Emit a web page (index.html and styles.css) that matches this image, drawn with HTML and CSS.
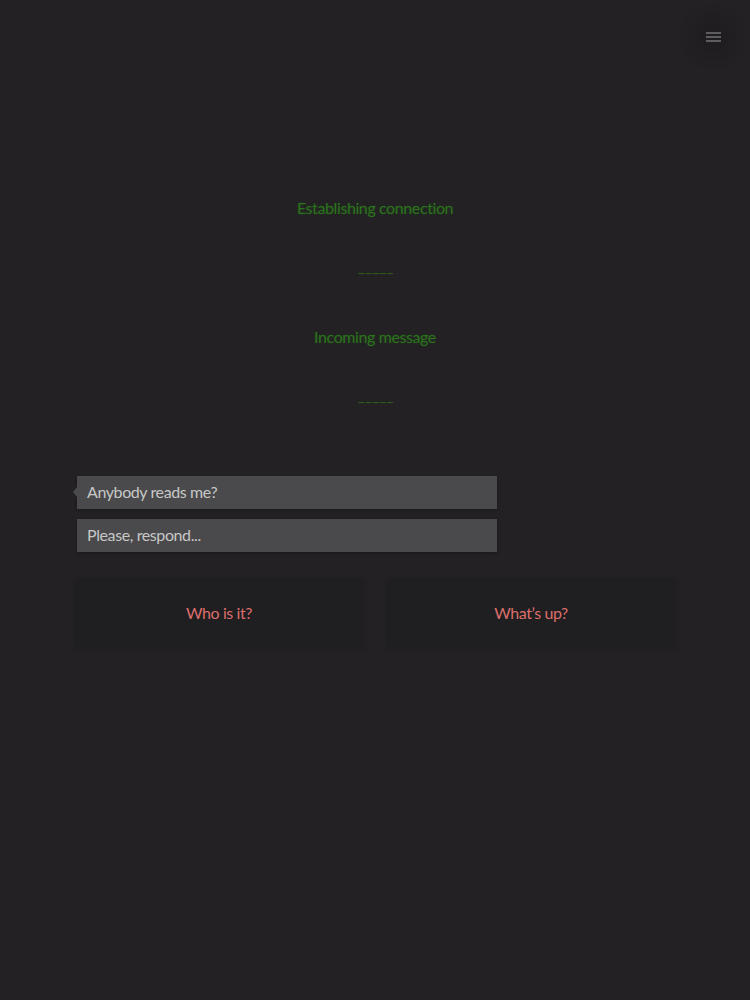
FILE: index.html
```html
<!DOCTYPE html>
<html>
<head>
<meta charset="utf-8">
<link rel="stylesheet" href="styles.css">
</head>
<body>
<button class="menu" aria-label="Menu">
  <span class="bar"></span><span class="bar"></span><span class="bar"></span>
</button>
<main class="page">
  <section class="status">
    <p class="status-line">Establishing connection</p>
    <p class="sep">–––––</p>
    <p class="status-line">Incoming message</p>
    <p class="sep">–––––</p>
  </section>
  <section class="chat">
    <div class="bubble incoming">Anybody reads me?</div>
    <div class="bubble">Please, respond...</div>
  </section>
  <section class="choices">
    <button class="choice">Who is it?</button>
    <button class="choice">What’s up?</button>
  </section>
</main>
</body>
</html>
```
FILE: styles.css
```css
html, body {
  margin: 0;
  padding: 0;
  background: #232124;
  height: 100%;
}
body {
  font-family: "Lato", "Noto Sans", sans-serif;
  font-size: 16px;
  letter-spacing: -0.4px;
}
.menu {
  position: absolute;
  top: 17px;
  right: 17px;
  width: 40px;
  height: 40px;
  border: none;
  border-radius: 50%;
  background: radial-gradient(circle, #1f1d20 40%, #211f22 75%, rgba(35, 33, 36, 0) 100%);
  box-shadow: 0 0 10px 3px rgba(28, 26, 29, 0.45);
  display: flex;
  flex-direction: column;
  align-items: center;
  justify-content: center;
  gap: 2px;
  padding: 0;
}
.menu .bar {
  display: block;
  width: 15px;
  height: 2px;
  background: #5d5c5f;
}
.page {
  width: 598px;
  margin: 0 auto;
  padding-top: 198px;
}
.status {
  display: flex;
  flex-direction: column;
  align-items: center;
  gap: 44.5px;
}
.status p {
  margin: 0;
  line-height: 20px;
  text-align: center;
}
.status-line {
  color: #2b731c;
  text-shadow: 0 0 3px rgba(43, 115, 28, 0.3);
}
.sep {
  color: #2a5c1b;
  font-size: 15px;
  letter-spacing: -1.5px;
  position: relative;
  top: -1px;
}
.chat {
  margin-top: 64.5px;
  display: flex;
  flex-direction: column;
  gap: 10px;
}
.bubble {
  position: relative;
  width: 420px;
  box-sizing: border-box;
  height: 33px;
  line-height: 31px;
  margin-left: 1px;
  padding-left: 10px;
  background: #4a494c;
  color: #c6c8c6;
  box-shadow: 0 1px 3px rgba(0, 0, 0, 0.3);
}
.bubble.incoming::before {
  content: "";
  position: absolute;
  left: -4px;
  top: 11px;
  border-style: solid;
  border-width: 5px 4px 5px 0;
  border-color: transparent #4a494c transparent transparent;
}
.choices {
  margin-top: 28px;
  display: grid;
  grid-template-columns: 1fr 1fr;
  gap: 26px;
}
.choice {
  height: 68px;
  border: none;
  background: #1f1e20;
  box-shadow: 0 0 3px 1px rgba(27, 26, 28, 0.5);
  color: #dc6f6b;
  font-family: inherit;
  font-size: 16px;
  letter-spacing: -0.4px;
  padding: 0 0 4px;
}
```
